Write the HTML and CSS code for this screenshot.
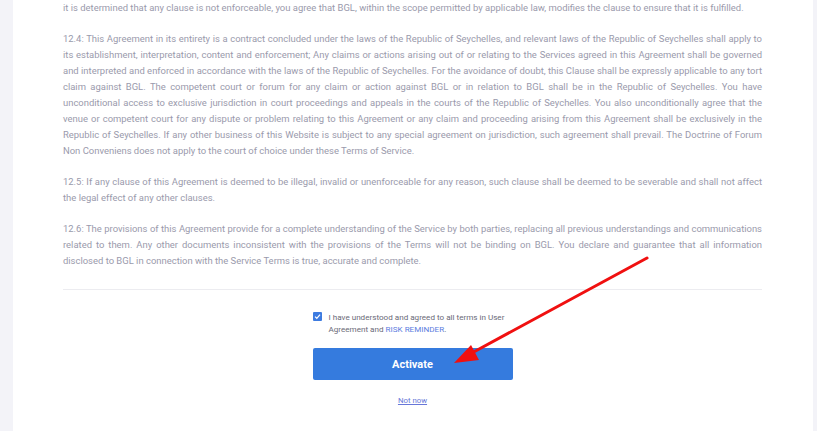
FILE: index.html
```html
<!DOCTYPE html>
<html>
<head>
<meta charset="utf-8">
<link rel="stylesheet" href="styles.css">
</head>
<body>
<div class="page">
  <div class="side-left"></div>
  <main class="panel">
    <div class="terms">
      <p>it is determined that any clause is not enforceable, you agree that BGL, within the scope permitted by applicable law, modifies the clause to ensure that it is fulfilled.</p>
      <p>12.4: This Agreement in its entirety is a contract concluded under the laws of the Republic of Seychelles, and relevant laws of the Republic of Seychelles shall apply to its establishment, interpretation, content and enforcement; Any claims or actions arising out of or relating to the Services agreed in this Agreement shall be governed and interpreted and enforced in accordance with the laws of the Republic of Seychelles. For the avoidance of doubt, this Clause shall be expressly applicable to any tort claim against BGL. The competent court or forum for any claim or action against BGL or in relation to BGL shall be in the Republic of Seychelles. You have unconditional access to exclusive jurisdiction in court proceedings and appeals in the courts of the Republic of Seychelles. You also unconditionally agree that the venue or competent court for any dispute or problem relating to this Agreement or any claim and proceeding arising from this Agreement shall be exclusively in the Republic of Seychelles. If any other business of this Website is subject to any special agreement on jurisdiction, such agreement shall prevail. The Doctrine of Forum Non Conveniens does not apply to the court of choice under these Terms of Service.</p>
      <p>12.5: If any clause of this Agreement is deemed to be illegal, invalid or unenforceable for any reason, such clause shall be deemed to be severable and shall not affect the legal effect of any other clauses.</p>
      <p>12.6: The provisions of this Agreement provide for a complete understanding of the Service by both parties, replacing all previous understandings and communications related to them. Any other documents inconsistent with the provisions of the Terms will not be binding on BGL. You declare and guarantee that all information disclosed to BGL in connection with the Service Terms is true, accurate and complete.</p>
    </div>
    <div class="divider"></div>
    <div class="actions">
      <label class="agree">
        <span class="check"><svg viewBox="0 0 10 10" width="7" height="7"><path d="M1.5 5.2 L4 7.6 L8.6 2.4" fill="none" stroke="#fff" stroke-width="1.8"/></svg></span>
        <span class="agree-text">I have understood and agreed to all terms in User Agreement and <a class="risk">RISK REMINDER</a>.</span>
      </label>
      <button class="activate">Activate</button>
      <a class="not-now">Not now</a>
    </div>
    <svg class="arrow" width="817" height="431" viewBox="0 0 817 431">
      <line x1="647" y1="258" x2="470" y2="354" stroke="#f01010" stroke-width="3" stroke-linecap="round"/>
      <polygon points="454,363 471,345 479,360" fill="#f01010"/>
    </svg>
  </main>
  <div class="side-right"></div>
</div>
</body>
</html>
```

FILE: styles.css
```css
html, body {
  margin: 0;
  padding: 0;
}
body {
  background: #f3f3f8;
  width: 817px;
  height: 431px;
  overflow: hidden;
}
.page {
  display: flex;
  height: 431px;
}
.side-left {
  width: 13px;
  flex: none;
}
.side-right {
  flex: 1;
}
.panel {
  width: 800px;
  flex: none;
  background: #fff;
  box-sizing: border-box;
  padding: 0 51px 0 50px;
}
.terms {
  font-family: Roboto, "Liberation Sans", sans-serif;
  font-size: 9.45px;
  line-height: 16px;
  color: #9a9aac;
  text-align: justify;
}
.terms p {
  margin: 0 0 15px 0;
}
.terms p:last-child {
  margin-bottom: 0;
}
.divider {
  margin-top: 20px;
  height: 1px;
  background: #ececf0;
}
.actions {
  width: 200px;
  margin: 0 auto;
  display: flex;
  flex-direction: column;
  align-items: stretch;
  padding-top: 21px;
}
.agree {
  display: flex;
  gap: 7px;
  align-items: flex-start;
}
.check {
  width: 9px;
  height: 9px;
  flex: none;
  margin-top: 1px;
  background: #3d7be0;
  border-radius: 1px;
  display: flex;
  align-items: center;
  justify-content: center;
}
.agree-text {
  font-family: Roboto, "Liberation Sans", sans-serif;
  font-size: 8.1px;
  line-height: 12px;
  color: #6a6a78;
}
.risk {
  color: #5b7de0;
}
.activate {
  margin-top: 13px;
  height: 32px;
  border: none;
  border-radius: 2px;
  background: #357bde;
  color: #fff;
  font-family: Roboto, "Liberation Sans", sans-serif;
  font-size: 11px;
  font-weight: 700;
  padding: 0;
}
.not-now {
  margin-top: 16px;
  align-self: center;
  font-family: Roboto, "Liberation Sans", sans-serif;
  font-size: 7.8px;
  color: #6877d8;
  text-decoration: underline;
}
.arrow {
  position: absolute;
  left: 0;
  top: 0;
  pointer-events: none;
}
```
